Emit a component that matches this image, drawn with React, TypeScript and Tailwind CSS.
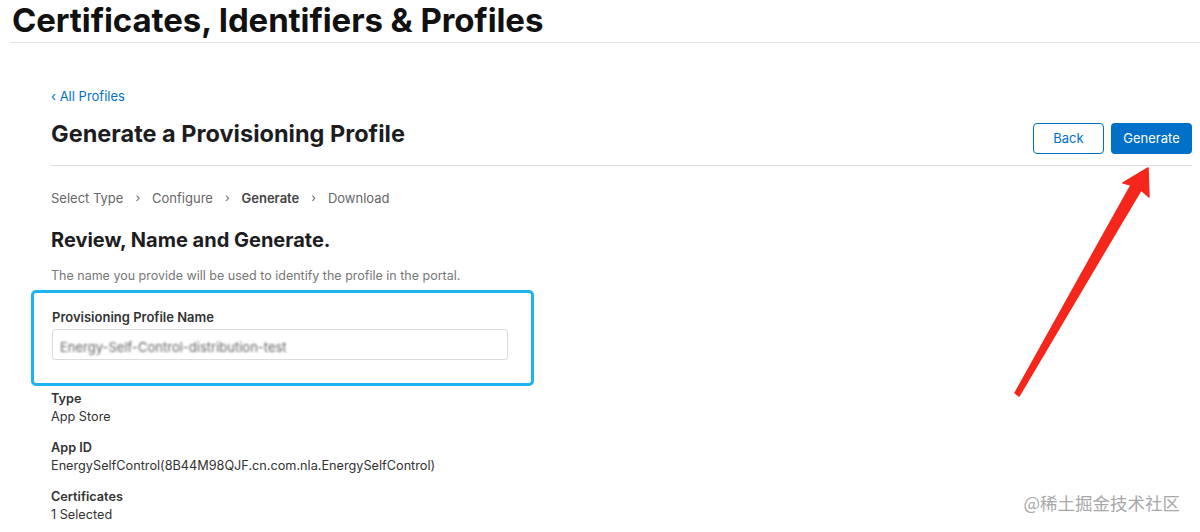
import React from "react";

function Arrow() {
  // red annotation arrow pointing at the Generate button
  return (
    <svg className="pointer-events-none absolute left-0 top-0" width="1200" height="532" viewBox="0 0 1200 532">
      <path
        d="M1148 168 L1149 197 L1141 190 L1019 396 L1015 393 L1131 185 L1123 183 Z"
        fill="#f5261b"
        stroke="#f5261b"
        strokeWidth="1.5"
        strokeLinejoin="round"
      />
    </svg>
  );
}

function Detail({ label, value }: { label: string; value: string }) {
  return (
    <div className="text-[12.7px] leading-[18px]">
      <div className="font-semibold text-[#333]">{label}</div>
      <div className="text-[#333]">{value}</div>
    </div>
  );
}

export default function App() {
  return (
    <div className="relative h-[532px] w-[1200px] overflow-hidden bg-white font-['Inter',sans-serif] text-[#1d1d1f]">
      <div className="ml-[10px] border-b border-[#e3e3e3] pb-[4px] pl-[2px] pt-[2px]">
        <h1 className="text-[33px] font-bold leading-[36px] tracking-[-0.1px] text-[#111]">
          Certificates, Identifiers &amp; Profiles
        </h1>
      </div>

      <div className="pl-[51px] pr-2">
        <a className="mt-[45px] block text-[13px] leading-[16px] text-[#0070c9]">‹ All Profiles</a>

        <div className="mt-[15px] flex items-end justify-between border-b border-[#dedede] pb-[12px]">
          <h2 className="pb-[4px] text-[23.5px] font-bold leading-[30px] text-[#1d1d1f]">
            Generate a Provisioning Profile
          </h2>
          <div className="flex translate-y-[1px] gap-[7px]">
            <button className="h-[31px] w-[71px] rounded-[4px] border border-[#0070c9] text-[13px] text-[#0070c9]">
              Back
            </button>
            <button className="h-[31px] w-[81px] rounded-[4px] bg-[#0070c9] text-[13px] text-white">Generate</button>
          </div>
        </div>

        <div className="mt-[24px] flex items-center text-[13px] leading-[16px] text-[#666]">
          <span>Select Type</span>
          <span className="mx-[12px] text-[12px]">›</span>
          <span>Configure</span>
          <span className="mx-[12px] text-[12px]">›</span>
          <span className="font-semibold text-[#444]">Generate</span>
          <span className="mx-[12px] text-[12px]">›</span>
          <span>Download</span>
        </div>

        <h3 className="mt-[22px] text-[20px] font-bold leading-[24px] text-[#1d1d1f]">Review, Name and Generate.</h3>

        <p className="mt-[16px] text-[12.5px] leading-[16px] text-[#777]">
          The name you provide will be used to identify the profile in the portal.
        </p>
      </div>

      <div className="ml-[31px] mt-[6px] h-[96px] w-[503px] rounded-[5px] border-[3px] border-[#1cb3ee] pl-[18px] pt-[16px]">
        <div className="text-[13px] font-semibold leading-[16px] text-[#333]">Provisioning Profile Name</div>
        <div className="mt-[4px] flex h-[31px] w-[456px] items-end overflow-hidden rounded-[3px] border border-[#dcdcdc] px-[7px]">
          <span className="translate-y-[-4px] text-[13px] leading-[16px] text-[#666] blur-[0.9px]">
            Energy-Self-Control-distribution-test
          </span>
        </div>
      </div>

      <div className="mt-[4px] flex flex-col gap-[13px] pl-[51px]">
        <Detail label="Type" value="App Store" />
        <Detail label="App ID" value="EnergySelfControl(8B44M98QJF.cn.com.nla.EnergySelfControl)" />
        <Detail label="Certificates" value="1 Selected" />
      </div>

      <div className="absolute bottom-[17px] right-[20px] font-['Noto_Sans_CJK_SC',sans-serif] text-[17.5px] leading-[24px] text-[#a8a8a8]">
        @稀土掘金技术社区
      </div>

      <Arrow />
    </div>
  );
}
